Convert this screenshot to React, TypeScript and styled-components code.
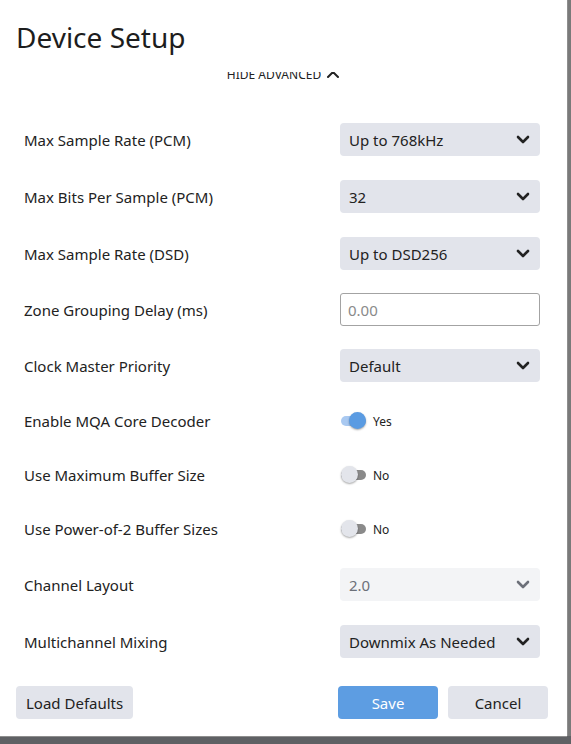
import { useEffect, useRef } from 'react'
import styled, { createGlobalStyle } from 'styled-components'

const GlobalStyle = createGlobalStyle`
  html, body {
    margin: 0;
    padding: 0;
    background: #727374;
    font-family: 'Noto Sans', 'Open Sans', sans-serif;
  }
  * { box-sizing: border-box; }
`

type Row =
  | { kind: 'select'; label: string; value: string; disabled?: boolean }
  | { kind: 'input'; label: string; placeholder: string }
  | { kind: 'toggle'; label: string; on: boolean }

const rows: Row[] = [
  { kind: 'select', label: 'Max Sample Rate (PCM)', value: 'Up to 768kHz' },
  { kind: 'select', label: 'Max Bits Per Sample (PCM)', value: '32' },
  { kind: 'select', label: 'Max Sample Rate (DSD)', value: 'Up to DSD256' },
  { kind: 'input', label: 'Zone Grouping Delay (ms)', placeholder: '0.00' },
  { kind: 'select', label: 'Clock Master Priority', value: 'Default' },
  { kind: 'toggle', label: 'Enable MQA Core Decoder', on: true },
  { kind: 'toggle', label: 'Use Maximum Buffer Size', on: false },
  { kind: 'toggle', label: 'Use Power-of-2 Buffer Sizes', on: false },
  { kind: 'select', label: 'Channel Layout', value: '2.0', disabled: true },
  { kind: 'select', label: 'Multichannel Mixing', value: 'Downmix As Needed' },
]

const rowHeight = { select: 57, input: 55, toggle: 54 }

// small bold chevron, 10px wide
const Chevron = ({ up, stroke = 2.6 }: { up?: boolean; stroke?: number }) => (
  <svg width="14" height="9" viewBox="0 0 14 9" fill="none" stroke="currentColor" strokeWidth={stroke} strokeLinecap="round" strokeLinejoin="round">
    <polyline points={up ? '2 7 7 2 12 7' : '2 2 7 7 12 2'} />
  </svg>
)

export default function App() {
  // refs
  const bodyRef = useRef<HTMLDivElement>(null)

  // effects
  useEffect(() => {
    if (bodyRef.current) bodyRef.current.scrollTop = 5
  }, [])

  return (
    <Page>
      <GlobalStyle />
      <Dialog>
        <Header>
          <Title>Device Setup</Title>
        </Header>
        <Body ref={bodyRef}>
          <AdvancedLink>
            HIDE ADVANCED
            <Chevron up stroke={2} />
          </AdvancedLink>
          <Settings>
            {rows.map((row) => (
              <SettingRow key={row.label} $height={rowHeight[row.kind]}>
                <Label>{row.label}</Label>
                {row.kind === 'select' && (
                  <Select $disabled={row.disabled}>
                    <span>{row.value}</span>
                    <Chevron />
                  </Select>
                )}
                {row.kind === 'input' && <TextInput placeholder={row.placeholder} />}
                {row.kind === 'toggle' && (
                  <ToggleWrap>
                    <Track $on={row.on}>
                      <Knob $on={row.on} />
                    </Track>
                    <ToggleText>{row.on ? 'Yes' : 'No'}</ToggleText>
                  </ToggleWrap>
                )}
              </SettingRow>
            ))}
          </Settings>
        </Body>
        <Footer>
          <Button>Load Defaults</Button>
          <FooterRight>
            <Button $primary $wide>
              Save
            </Button>
            <Button $wide>Cancel</Button>
          </FooterRight>
        </Footer>
      </Dialog>
    </Page>
  )
}

const Page = styled.div`
  width: 571px;
  height: 744px;
  overflow: hidden;
  background: linear-gradient(to bottom, #7a7a7a 0, #7a7a7a 736px, #5f6164 736px);
`

const Dialog = styled.div`
  width: 567px;
  height: 736px;
  background: #fff;
  display: flex;
  flex-direction: column;
  box-shadow: 1px 0 0 #8e8e8e, 0 1px 0 #8e8e8e;
`

const Header = styled.div`
  height: 72px;
  flex: none;
  padding: 19px 16px 0;
`

const Title = styled.h1`
  margin: 0;
  font-size: 28px;
  line-height: 36px;
  font-weight: 400;
  color: #1d1d1d;
`

const Body = styled.div`
  flex: 1;
  overflow: hidden;
`

const AdvancedLink = styled.div`
  display: flex;
  justify-content: center;
  align-items: center;
  gap: 5px;
  font-size: 12px;
  line-height: 16px;
  color: #222;
  svg {
    margin-top: -1px;
  }
`

const Settings = styled.div`
  padding: 28px 27px 80px 24px;
`

const SettingRow = styled.div<{ $height: number }>`
  display: grid;
  grid-template-columns: 1fr 200px;
  align-items: center;
  height: ${(p) => p.$height}px;
`

const Label = styled.div`
  font-size: 15px;
  color: #222;
`

const Select = styled.div<{ $disabled?: boolean }>`
  height: 33px;
  border-radius: 4px;
  background: ${(p) => (p.$disabled ? '#f3f4f6' : '#e2e4eb')};
  color: ${(p) => (p.$disabled ? '#6c7079' : '#222')};
  display: flex;
  align-items: center;
  justify-content: space-between;
  padding: 0 10px 0 9px;
  font-size: 15px;
`

const TextInput = styled.input`
  height: 33px;
  width: 200px;
  border: 1px solid #a3a3a3;
  border-radius: 3px;
  padding: 0 7px;
  font-family: inherit;
  font-size: 15px;
  color: #222;
  outline: none;
  &::placeholder {
    color: #8a8a8a;
  }
`

const ToggleWrap = styled.div`
  display: flex;
  align-items: center;
  gap: 7px;
  padding-left: 1px;
`

const Track = styled.div<{ $on: boolean }>`
  position: relative;
  width: 25px;
  height: 10px;
  border-radius: 5px;
  background: ${(p) => (p.$on ? '#a9c9f1' : '#8a8a8a')};
`

const Knob = styled.div<{ $on: boolean }>`
  position: absolute;
  top: -4px;
  left: ${(p) => (p.$on ? '8px' : '0')};
  width: 17px;
  height: 17px;
  border-radius: 50%;
  background: ${(p) => (p.$on ? '#5a9be2' : '#e3e5eb')};
  box-shadow: 0 1px 2px rgba(0, 0, 0, 0.35);
`

const ToggleText = styled.span`
  font-size: 12px;
  color: #222;
`

const Footer = styled.div`
  flex: none;
  display: flex;
  justify-content: space-between;
  padding: 0 19px 17px 16px;
`

const FooterRight = styled.div`
  display: flex;
  gap: 10px;
`

const Button = styled.button<{ $primary?: boolean; $wide?: boolean }>`
  height: 33px;
  min-width: ${(p) => (p.$wide ? '100px' : '0')};
  padding: 0 10px;
  border: none;
  border-radius: 4px;
  font-family: inherit;
  font-size: 15px;
  background: ${(p) => (p.$primary ? '#5d9de2' : '#e2e4eb')};
  color: ${(p) => (p.$primary ? '#fff' : '#222')};
`
